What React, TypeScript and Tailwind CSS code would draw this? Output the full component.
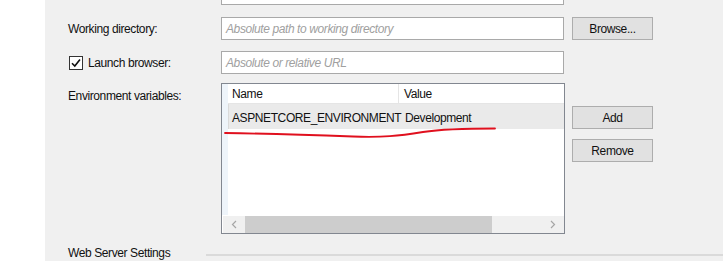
import React from "react";

const font = "font-['Liberation_Sans','Noto_Sans',sans-serif] tracking-[-0.4px]";

function TextBox({ placeholder, className = "" }: { placeholder?: string; className?: string }) {
  return (
    <div
      className={`w-[343px] h-[23px] bg-white border border-[#a9a9a9] flex items-center pl-[4px] text-[12px] italic text-[#a0a0a0] ${className}`}
    >
      {placeholder}
    </div>
  );
}

function WinButton({ label, className = "" }: { label: string; className?: string }) {
  return (
    <div
      className={`w-[81px] h-[23px] bg-[#e1e1e1] border border-[#adadad] flex items-center justify-center text-[12px] text-[#111] ${className}`}
    >
      {label}
    </div>
  );
}

function EnvList() {
  return (
    <div className="relative w-[344px] h-[151px] bg-white border border-[#828790] flex flex-col">
      <div className="absolute left-0 top-0 bottom-[18px] w-[6px] bg-[#eef4fa]" />
      {/* header */}
      <div className="flex h-[20px] border-b border-[#e5e5e5] text-[12px] text-[#111] pl-[6px]">
        <div className="w-[171px] border-r border-[#e5e5e5] pl-[4px] flex items-center">Name</div>
        <div className="flex-1 pl-[5px] flex items-center">Value</div>
      </div>
      {/* row */}
      <div className="flex h-[25px] pt-[2px] ml-[6px] bg-[#eaeaea] border-l border-[#dadada] text-[12px] text-[#111]">
        <div className="w-[171px] pl-[3px] flex items-center whitespace-nowrap">ASPNETCORE_ENVIRONMENT</div>
        <div className="flex-1 pl-[5px] flex items-center">Development</div>
      </div>
      <div className="flex-1" />
      {/* horizontal scrollbar */}
      <div className="h-[17px] flex bg-[#f0f0f0] ml-[1px]">
        <div className="w-[22px] flex items-center justify-center">
          <svg width="6" height="9" viewBox="0 0 6 9">
            <path d="M5 1 L1.5 4.5 L5 8" fill="none" stroke="#a6a6a6" strokeWidth="1.2" />
          </svg>
        </div>
        <div className="w-[247px] bg-[#cdcdcd]" />
        <div className="flex-1" />
        <div className="w-[22px] flex items-center justify-center">
          <svg width="6" height="9" viewBox="0 0 6 9">
            <path d="M1 1 L4.5 4.5 L1 8" fill="none" stroke="#a6a6a6" strokeWidth="1.2" />
          </svg>
        </div>
      </div>
    </div>
  );
}

export default function App() {
  return (
    <div className={`w-[723px] h-[261px] flex overflow-hidden ${font}`}>
      <div className="w-[45px] bg-white" />
      <div className="relative flex-1 bg-[#f0f0f0] pl-[23px] text-[12px] text-[#111]">
        {/* top partially visible textbox */}
        <div className="flex mt-[-18px]">
          <div className="w-[153px]" />
          <TextBox />
        </div>

        {/* working directory */}
        <div className="flex items-center mt-[12px]">
          <div className="w-[153px]">Working directory:</div>
          <TextBox placeholder="Absolute path to working directory" />
          <WinButton label="Browse..." className="ml-[8px]" />
        </div>

        {/* launch browser */}
        <div className="flex items-center mt-[11px]">
          <div className="w-[153px] flex items-center">
            <div className="w-[14px] h-[14px] bg-white border border-[#333] flex items-center justify-center ml-[1px]">
              <svg width="10" height="10" viewBox="0 0 10 10">
                <path d="M1 5.2 L3.8 8 L9 1.5" fill="none" stroke="#111" strokeWidth="1.6" />
              </svg>
            </div>
            <span className="ml-[5px]">Launch browser:</span>
          </div>
          <TextBox placeholder="Absolute or relative URL" />
        </div>

        {/* environment variables */}
        <div className="flex mt-[9px]">
          <div className="w-[153px] pt-[4px]">Environment variables:</div>
          <EnvList />
          <div className="flex flex-col ml-[7px] pt-[23px] gap-[10px]">
            <WinButton label="Add" />
            <WinButton label="Remove" />
          </div>
        </div>

        {/* web server settings */}
        <div className="flex items-center mt-[10px]">
          <span className="w-[138px] whitespace-nowrap">Web Server Settings</span>
          <div className="flex-1 h-[2px] bg-[#dadada] mt-[3px]" />
        </div>

        {/* red freehand underline */}
        <svg
          className="absolute left-[178px] top-[124px] pointer-events-none"
          width="280"
          height="18"
          viewBox="0 0 280 18"
        >
          <path
            d="M2 9 C 40 9.5, 90 11, 130 12.5 C 160 13.5, 175 12, 200 8 C 220 5, 240 4.5, 272 4.5"
            fill="none"
            stroke="#e0101e"
            strokeWidth="1.8"
            strokeLinecap="round"
          />
        </svg>
      </div>
    </div>
  );
}
